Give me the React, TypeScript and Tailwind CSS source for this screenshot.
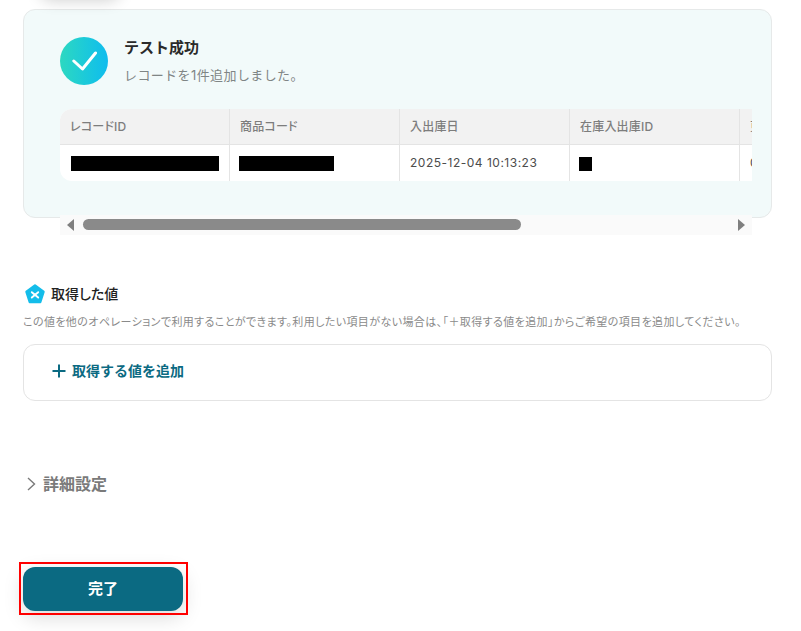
import React from "react";

const columns = [
  { label: "レコードID" },
  { label: "商品コード" },
  { label: "入出庫日" },
  { label: "在庫入出庫ID" },
  { label: "更新日時" },
];

const Redacted: React.FC<{ className: string }> = ({ className }) => <div className={`bg-black ${className}`} />;

const App: React.FC = () => {
  return (
    <div className="relative h-[631px] w-[801px] overflow-hidden bg-white px-[23px] pt-[9px] font-['Inter','Noto_Sans_CJK_JP',sans-serif]">
      {/* shadow of the button scrolled off the top */}
      <div className="absolute -top-[44px] left-[40px] h-[40px] w-[80px] rounded-xl shadow-[0_4px_16px_rgba(0,0,0,0.2)]" />

      {/* result card */}
      <div className="h-[209px] w-[749px] rounded-xl border border-[#e6e9e9] bg-[#f2fafa] pl-[36px] pr-[19px] pt-[27px]">
        <div className="flex gap-4">
          <div className="flex h-12 w-12 items-center justify-center rounded-full bg-gradient-to-r from-[#2dd8c0] to-[#10bcee]">
            <svg width="26" height="22" viewBox="0 0 26 22" fill="none">
              <path d="M2.8 11 L11.5 19 L24.5 3" stroke="#fff" strokeWidth="3" strokeLinecap="round" strokeLinejoin="round" />
            </svg>
          </div>
          <div>
            <p className="mt-[1px] text-[15px] font-semibold leading-5 text-[#2a2a2a]">テスト成功</p>
            <p className="mt-[7px] text-[13px] leading-5 tracking-[0.4px] text-[#7f8585]">レコードを1件追加しました。</p>
          </div>
        </div>

        <div className="mt-[24px] h-[72px] w-[692px] overflow-hidden rounded-l-xl bg-white">
          <div className="flex h-[36px] w-[900px] border-b border-[#e4e4e4] bg-[#f2f2f2]">
            {columns.map((col) => (
              <div key={col.label} className="flex w-[170px] shrink-0 items-center border-r border-[#e4e4e4] pl-[10px] text-xs font-medium tracking-[0.2px] text-[#7d7d7d] [font-feature-settings:'palt']">
                {col.label}
              </div>
            ))}
          </div>
          <div className="flex h-[36px] w-[900px]">
            <div className="flex w-[170px] shrink-0 items-center border-r border-[#e4e4e4] pl-[11px]">
              <Redacted className="h-[15px] w-[148px]" />
            </div>
            <div className="flex w-[170px] shrink-0 items-center border-r border-[#e4e4e4] pl-[9px]">
              <Redacted className="h-[15px] w-[95px]" />
            </div>
            <div className="flex w-[170px] shrink-0 items-center border-r border-[#e4e4e4] pl-[10px] text-xs tracking-[0.5px] text-[#4c4c4c]">
              2025-12-04 10:13:23
            </div>
            <div className="flex w-[170px] shrink-0 items-center border-r border-[#e4e4e4] pl-[9px]">
              <Redacted className="mt-[2px] h-[14px] w-[13px]" />
            </div>
            <div className="flex w-[170px] shrink-0 items-center pl-[10px] text-xs text-[#4c4c4c]">0</div>
          </div>
        </div>

        {/* horizontal scrollbar */}
        <div className="mt-[34px] flex h-5 w-[692px] items-center bg-[#fafafa] pb-[1px] pl-[7px]">
          <div className="h-0 w-0 border-y-[6.5px] border-r-[7px] border-y-transparent border-r-[#7f7f7f]" />
          <div className="ml-[9px] h-[11px] w-[438px] rounded-full bg-[#8a8a8a]" />
          <div className="ml-[217px] h-0 w-0 border-y-[6.5px] border-l-[7px] border-y-transparent border-l-[#7f7f7f]" />
        </div>
      </div>

      {/* fetched values */}
      <div className="mt-[66px] flex h-5 items-center pl-[2px]">
        <svg width="20" height="20" viewBox="0 0 20 20">
          <path d="M10 1.5 L18.5 7.8 L15.3 18 L4.7 18 L1.5 7.8 Z" fill="#14bdea" stroke="#14bdea" strokeWidth="2.4" strokeLinejoin="round" />
          <path d="M6.8 8.2 L13.2 13.6 M13.2 8.2 L6.8 13.6" stroke="#fff" strokeWidth="1.9" strokeLinecap="round" />
        </svg>
        <p className="ml-[6px] text-sm font-medium text-[#222] [font-feature-settings:'palt']">取得した値</p>
      </div>
      <p className="mt-[8px] whitespace-nowrap text-[11px] leading-5 tracking-[0.4px] text-[#8a8a8a] [font-feature-settings:'palt']">
        この値を他のオペレーションで利用することができます。利用したい項目がない場合は、「＋取得する値を追加」からご希望の項目を追加してください。
      </p>
      <div className="mt-[12px] flex h-[57px] w-[749px] items-center rounded-xl border border-[#e4e4e4] pb-[3px] pl-[28px]">
        <svg width="14" height="14" viewBox="0 0 14 14" className="text-[#0b6a82]">
          <path d="M7 0.5 V13.5 M0.5 7 H13.5" stroke="currentColor" strokeWidth="2" />
        </svg>
        <span className="ml-[6px] text-sm font-bold text-[#0b6a82]">取得する値を追加</span>
      </div>

      {/* advanced settings */}
      <div className="mt-[73px] flex h-5 items-center pl-[4px]">
        <svg width="9" height="14" viewBox="0 0 9 14" fill="none">
          <path d="M1 1 L7.5 7 L1 13" stroke="#7a7a7a" strokeWidth="1.4" />
        </svg>
        <span className="ml-[7px] text-base font-bold text-[#7a7a7a]">詳細設定</span>
      </div>

      {/* submit */}
      <div className="relative mt-[73px] w-[160px]">
        <button className="h-[44px] w-[160px] rounded-xl bg-[#0b6a82] text-[15px] font-bold text-white shadow-[0_6px_20px_rgba(0,0,0,0.15)]">
          完了
        </button>
        <div className="absolute -bottom-[4px] -left-[4px] -right-[5px] -top-[5px] border-2 border-[#f00]" />
      </div>
    </div>
  );
};

export default App;
